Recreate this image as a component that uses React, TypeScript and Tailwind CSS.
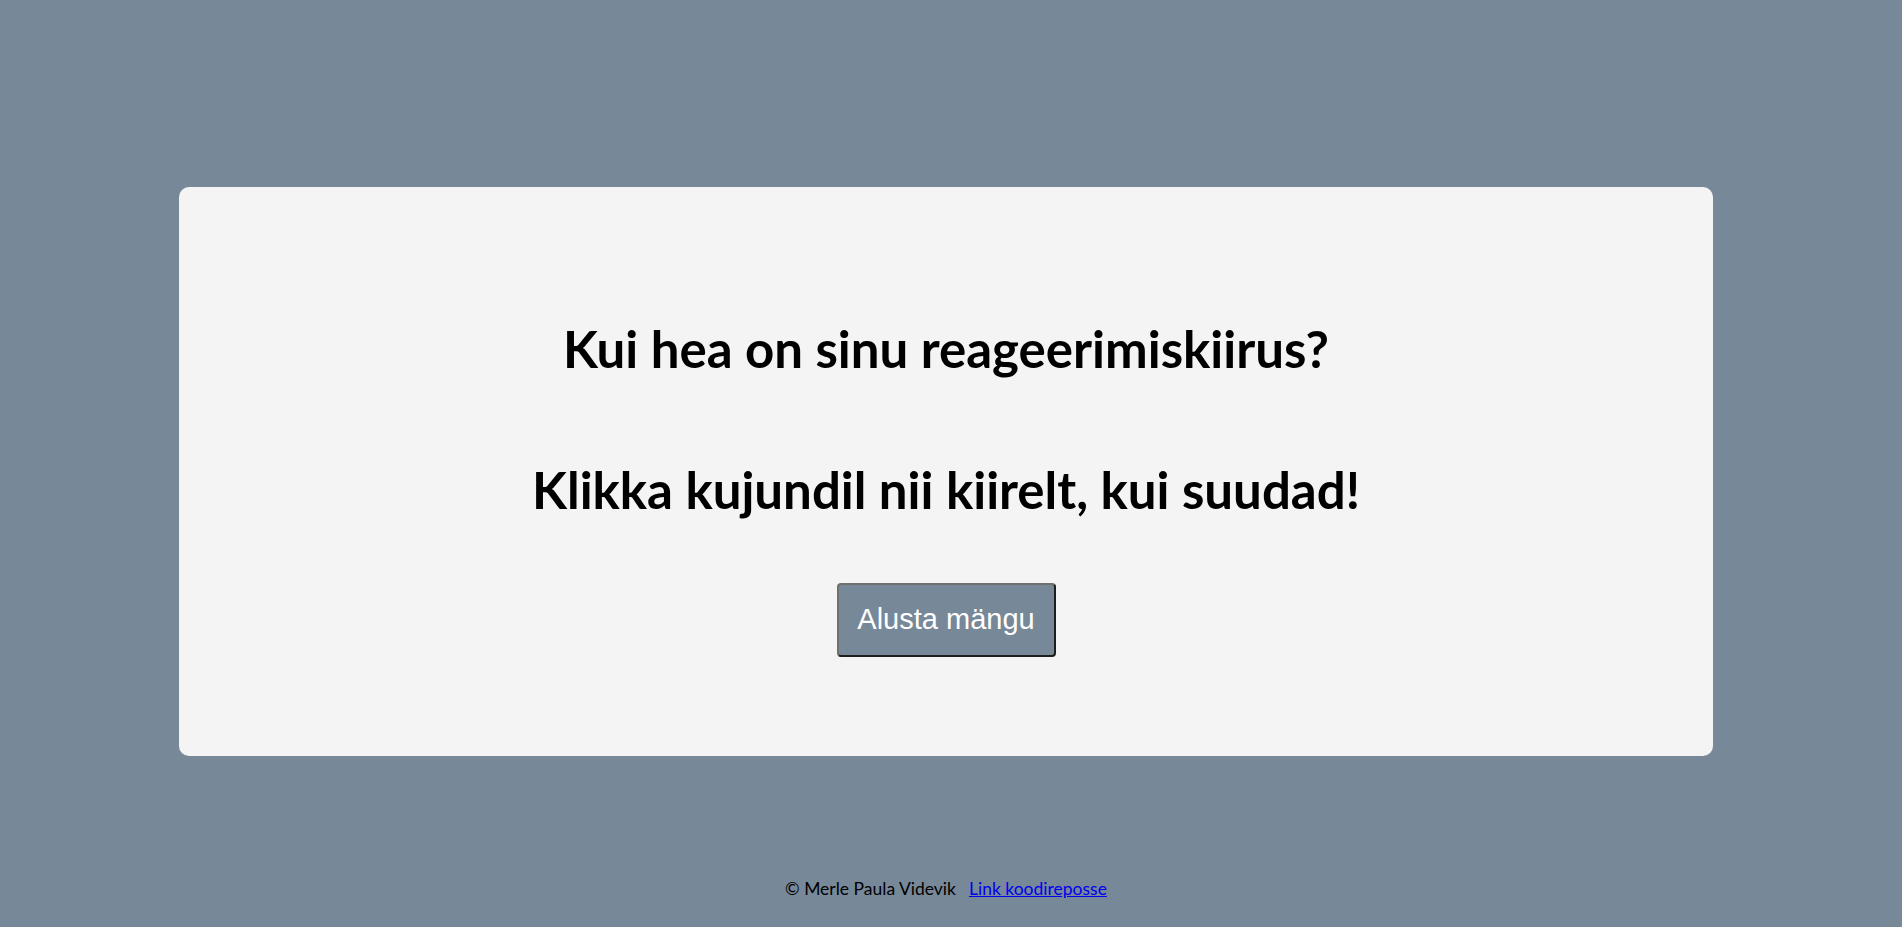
export default function App() {
  return (
    <div className="min-h-screen w-full bg-[#778899] flex flex-col pl-[179px] pr-[189px]" style={{ fontFamily: "Lato, 'Open Sans', sans-serif" }}>
      {/* Card */}
      <div className="mt-[187px] h-[569px] w-full bg-[#f4f4f4] rounded-[10px] flex flex-col items-center pt-[134px]">
        <h1 className="text-[51px] leading-[56px] font-bold text-black">Kui hea on sinu reageerimiskiirus?</h1>
        <h2 className="mt-[85px] text-[51px] leading-[56px] font-bold text-black">Klikka kujundil nii kiirelt, kui suudad!</h2>
        <button
          className="mt-[65px] w-[219px] h-[74px] bg-[#778899] text-white text-[29px] rounded-[4px] border-2 border-t-[#6f6f6f] border-l-[#6f6f6f] border-r-[#1e1e1e] border-b-[#1e1e1e]"
          style={{ fontFamily: "'Liberation Sans', Arial, sans-serif" }}
        >
          Alusta mängu
        </button>
      </div>

      {/* Footer */}
      <footer className="mt-[120px] flex justify-center items-center gap-[13px] text-[17.5px] text-black">
        <span>© Merle Paula Videvik</span>
        <a href="#" className="text-[#0000ee] underline">Link koodireposse</a>
      </footer>
    </div>
  );
}
